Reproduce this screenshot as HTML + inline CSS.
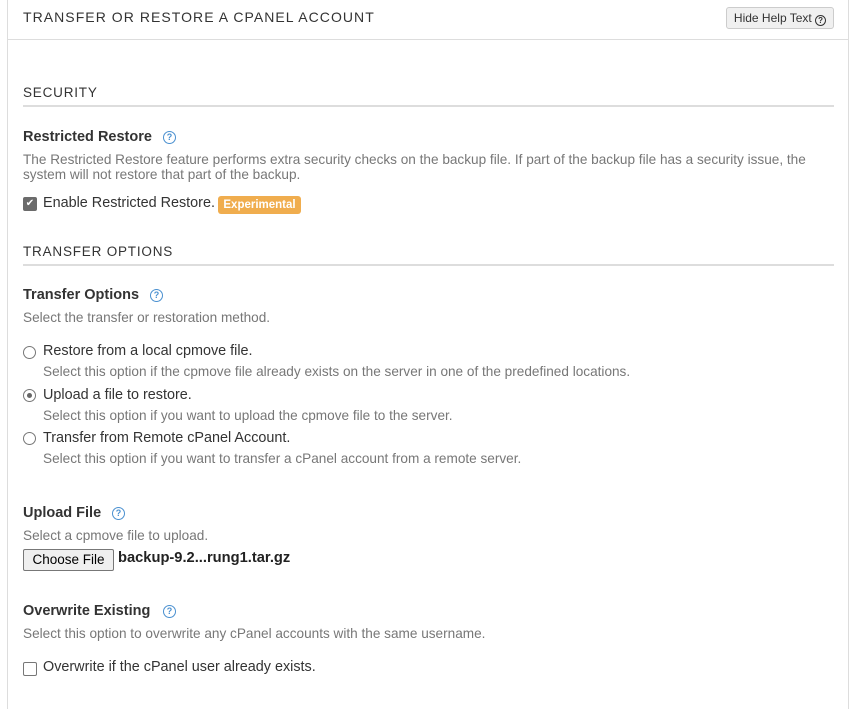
<!DOCTYPE html>
<html><head><style>
body{margin:0;width:856px;height:697px;background:#fff;font-family:"Liberation Sans",sans-serif;color:#333;position:relative;overflow:hidden}
.a{position:absolute;white-space:nowrap}
.panel{position:absolute;left:7px;top:-1px;width:840px;height:710px;border-left:1px solid #ddd;border-right:1px solid #ddd}
.hl{position:absolute;left:8px;width:840px;top:39px;height:1px;background:#ddd}
.title{font-size:14px;letter-spacing:1.05px;color:#333}
.sec{font-size:13.5px;letter-spacing:0.8px;color:#333}
.rule{position:absolute;left:23px;width:811px;height:2px;background:#ddd}
.lbl{font-size:14.5px;font-weight:bold;color:#333}
.help{font-size:13.6px;color:#777}
.opt{font-size:14.4px;color:#333}
.q{position:absolute;width:11px;height:11px;border:1.3px solid #4a90d0;border-radius:50%;color:#4a90d0;font-size:9px;font-weight:bold;text-align:center;line-height:11px}
.rad{position:absolute;width:11px;height:11px;border:1px solid #777;border-radius:50%;background:#fff}
.cb{position:absolute;width:12px;height:12px;border:1px solid #777;border-radius:2px;background:#fff}
</style></head><body>
<div class="panel"></div>
<div class="hl"></div>
<div class="a title" style="left:23px;top:9px">TRANSFER OR RESTORE A CPANEL ACCOUNT</div>
<div class="a" style="left:726px;top:7px;width:106px;height:20px;border:1px solid #ccc;border-radius:3px;background:#f0f0f0;font-size:12px;line-height:20px;text-align:center;color:#333">Hide Help Text <span style="display:inline-block;width:9px;height:9px;border:1.2px solid #333;border-radius:50%;font-size:8px;line-height:9px;font-weight:bold;vertical-align:-1px">?</span></div>

<div class="a sec" style="left:23px;top:85px">SECURITY</div>
<div class="rule" style="top:105px"></div>
<div class="a lbl" style="left:23px;top:129px">Restricted Restore</div>
<div class="q" style="left:163px;top:131px">?</div>
<div class="a help" style="left:23px;top:152px;line-height:15px">The Restricted Restore feature performs extra security checks on the backup file. If part of the backup file has a security issue, the<br>system will not restore that part of the backup.</div>
<div class="cb" style="left:23px;top:197px;background:#6b6b6b;border-color:#6b6b6b;color:#fff;font-size:10px;line-height:12px;text-align:center">✔</div>
<div class="a opt" style="left:43px;top:195px">Enable Restricted Restore.</div>
<div class="a" style="left:218px;top:196px;width:83px;height:18px;background:#f0ad4e;border-radius:3px;color:#fff;font-size:11.5px;font-weight:bold;line-height:18px;text-align:center">Experimental</div>

<div class="a sec" style="left:23px;top:244px">TRANSFER OPTIONS</div>
<div class="rule" style="top:264px"></div>
<div class="a lbl" style="left:23px;top:287px">Transfer Options</div>
<div class="q" style="left:150px;top:289px">?</div>
<div class="a help" style="left:23px;top:310px">Select the transfer or restoration method.</div>

<div class="rad" style="left:23px;top:346px"></div>
<div class="a opt" style="left:43px;top:343px">Restore from a local cpmove file.</div>
<div class="a help" style="left:43px;top:364px">Select this option if the cpmove file already exists on the server in one of the predefined locations.</div>
<div class="rad" style="left:23px;top:389px"></div>
<div class="a" style="left:27px;top:393px;width:5px;height:5px;border-radius:50%;background:#666"></div>
<div class="a opt" style="left:43px;top:387px">Upload a file to restore.</div>
<div class="a help" style="left:43px;top:408px">Select this option if you want to upload the cpmove file to the server.</div>
<div class="rad" style="left:23px;top:432px"></div>
<div class="a opt" style="left:43px;top:430px">Transfer from Remote cPanel Account.</div>
<div class="a help" style="left:43px;top:451px">Select this option if you want to transfer a cPanel account from a remote server.</div>

<div class="a lbl" style="left:23px;top:505px">Upload File</div>
<div class="q" style="left:112px;top:507px">?</div>
<div class="a help" style="left:23px;top:528px">Select a cpmove file to upload.</div>
<div class="a" style="left:23px;top:549px;width:89px;height:20px;border:1px solid #777;border-radius:2px;background:#efefef;font-size:13.5px;line-height:20px;text-align:center;color:#000">Choose File</div>
<div class="a" style="left:118px;top:550px;font-size:14.7px;font-weight:bold;color:#222">backup-9.2...rung1.tar.gz</div>

<div class="a lbl" style="left:23px;top:603px">Overwrite Existing</div>
<div class="q" style="left:163px;top:605px">?</div>
<div class="a help" style="left:23px;top:626px">Select this option to overwrite any cPanel accounts with the same username.</div>
<div class="cb" style="left:23px;top:662px"></div>
<div class="a opt" style="left:43px;top:659px">Overwrite if the cPanel user already exists.</div>
</body></html>
